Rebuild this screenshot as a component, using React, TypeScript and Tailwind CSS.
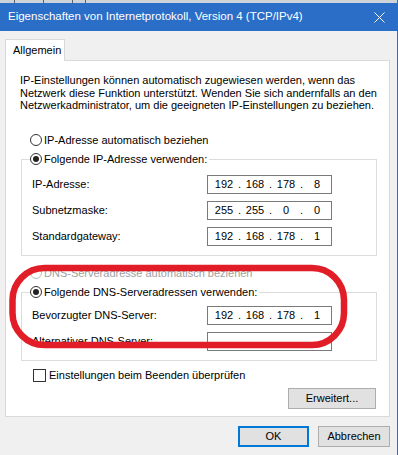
import React, { Fragment } from "react";

const font = { fontFamily: '"Liberation Sans", Arial, sans-serif' };

function Radio({ checked, disabled }: { checked?: boolean; disabled?: boolean }) {
  return (
    <span
      className={`w-[12px] h-[12px] rounded-full border bg-white flex items-center justify-center shrink-0 ${
        disabled ? "border-[#bcbcbc]" : "border-[#333333]"
      }`}
    >
      {checked && <span className="w-[6px] h-[6px] rounded-full bg-[#222]" />}
    </span>
  );
}

function Ip({ parts }: { parts: string[] }) {
  return (
    <div className="w-[125px] h-[19px] border border-[#7a7a7a] bg-white flex items-center pl-[3px] text-[11px] leading-none">
      {parts.map((p, i) => (
        <Fragment key={i}>
          <span className="w-[26px] text-center">{p}</span>
          {i < 3 && <span className="w-[5px] text-center">.</span>}
        </Fragment>
      ))}
    </div>
  );
}

function Row({ label, parts, className = "" }: { label: string; parts: string[]; className?: string }) {
  return (
    <div className={`flex items-center h-[19px] ${className}`}>
      <span className="w-[177px] pl-[2px]">{label}</span>
      <Ip parts={parts} />
    </div>
  );
}

export default function App() {
  return (
    <div
      className="relative w-[398px] h-[455px] overflow-hidden bg-[#f0f0f0] text-[11px] text-black border-r border-[#2a6ec8]"
      style={font}
    >
      {/* background strip */}
      <div className="h-[3px] bg-[#cdd3d9] flex">
        <div className="w-[14px]" />
        <div className="w-px bg-[#5a6470]" />
        <div className="w-[28px]" />
        <div className="w-px bg-[#5a6470]" />
        <div className="w-[28px]" />
        <div className="w-px bg-[#5a6470]" />
        <div className="w-[12px]" />
        <div className="w-px bg-[#5a6470]" />
      </div>
      {/* title bar */}
      <div className="h-[28px] bg-[#2a6ec8] flex items-center justify-between pl-[8px] pr-[12px] text-white text-[11.5px]">
        <span>Eigenschaften von Internetprotokoll, Version 4 (TCP/IPv4)</span>
        <svg width="11" height="11" viewBox="0 0 11 11">
          <path d="M0.5 0.5 L10.5 10.5 M10.5 0.5 L0.5 10.5" stroke="white" strokeWidth="1" />
        </svg>
      </div>

      {/* body */}
      <div className="pt-[8px] pl-[5px]">
        <div className="flex">
          <div className="relative z-10 -mb-px w-[60px] h-[22px] bg-white border border-b-0 border-[#d9d9d9] flex items-center pl-[7px] pb-[1px]">
            Allgemein
          </div>
        </div>
        <div className="w-[385px] h-[357px] bg-white border border-[#d9d9d9] pt-[13px] pl-[14px]">
          <p className="leading-[12.5px] w-[365px]">
            IP-Einstellungen können automatisch zugewiesen werden, wenn das Netzwerk diese Funktion
            unterstützt. Wenden Sie sich andernfalls an den Netzwerkadministrator, um die geeigneten
            IP-Einstellungen zu beziehen.
          </p>

          <div className="flex items-center h-[19px] mt-[19px] pl-[10px] gap-[2px]">
            <Radio />
            <span>IP-Adresse automatisch beziehen</span>
          </div>

          <fieldset className="ml-[1px] w-[356px] border border-[#dcdcdc] px-[8px] pb-[9px]">
            <legend className="pr-[2px]">
              <span className="flex items-center h-[19px] gap-[2px]">
                <Radio checked />
                <span>Folgende IP-Adresse verwenden:</span>
              </span>
            </legend>
            <Row label="IP-Adresse:" parts={["192", "168", "178", "8"]} className="mt-[6px]" />
            <Row label="Subnetzmaske:" parts={["255", "255", "0", "0"]} className="mt-[7px]" />
            <Row label="Standardgateway:" parts={["192", "168", "178", "1"]} className="mt-[7px]" />
          </fieldset>

          <div className="flex items-center h-[19px] mt-[8px] pl-[10px] gap-[2px] text-[#a0a0a0]">
            <Radio disabled />
            <span>DNS-Serveradresse automatisch beziehen</span>
          </div>

          <fieldset className="ml-[1px] w-[356px] border border-[#dcdcdc] px-[8px] pb-[9px]">
            <legend className="pr-[2px]">
              <span className="flex items-center h-[19px] gap-[2px]">
                <Radio checked />
                <span>Folgende DNS-Serveradressen verwenden:</span>
              </span>
            </legend>
            <Row label="Bevorzugter DNS-Server:" parts={["192", "168", "178", "1"]} className="mt-[4px]" />
            <Row label="Alternativer DNS-Server:" parts={["", "", "", ""]} className="mt-[7px]" />
          </fieldset>

          <div className="flex items-center h-[19px] mt-[5px] pl-[13px] gap-[3px]">
            <span className="w-[13px] h-[13px] border border-[#333] bg-white shrink-0" />
            <span>Einstellungen beim Beenden überprüfen</span>
          </div>

          <div className="flex justify-end mt-[3px] w-[356px]">
            <button className="w-[88px] h-[21px] bg-[#e1e1e1] border border-[#adadad] flex items-center justify-center">
              Erweitert...
            </button>
          </div>
        </div>

        <div className="flex justify-end gap-[9px] mt-[9px] w-[385px]">
          <button className="w-[71px] h-[21px] bg-[#e1e1e1] border-2 border-[#0078d7] flex items-center justify-center">
            OK
          </button>
          <button className="w-[72px] h-[21px] bg-[#e1e1e1] border border-[#adadad] flex items-center justify-center">
            Abbrechen
          </button>
        </div>
      </div>

      {/* red annotation */}
      <svg className="absolute left-0 top-0 pointer-events-none" width="398" height="455">
        <rect x="12.5" y="268" width="331.5" height="77" rx="32" ry="32" fill="none" stroke="#e11d27" strokeWidth="6.5" />
      </svg>
    </div>
  );
}
